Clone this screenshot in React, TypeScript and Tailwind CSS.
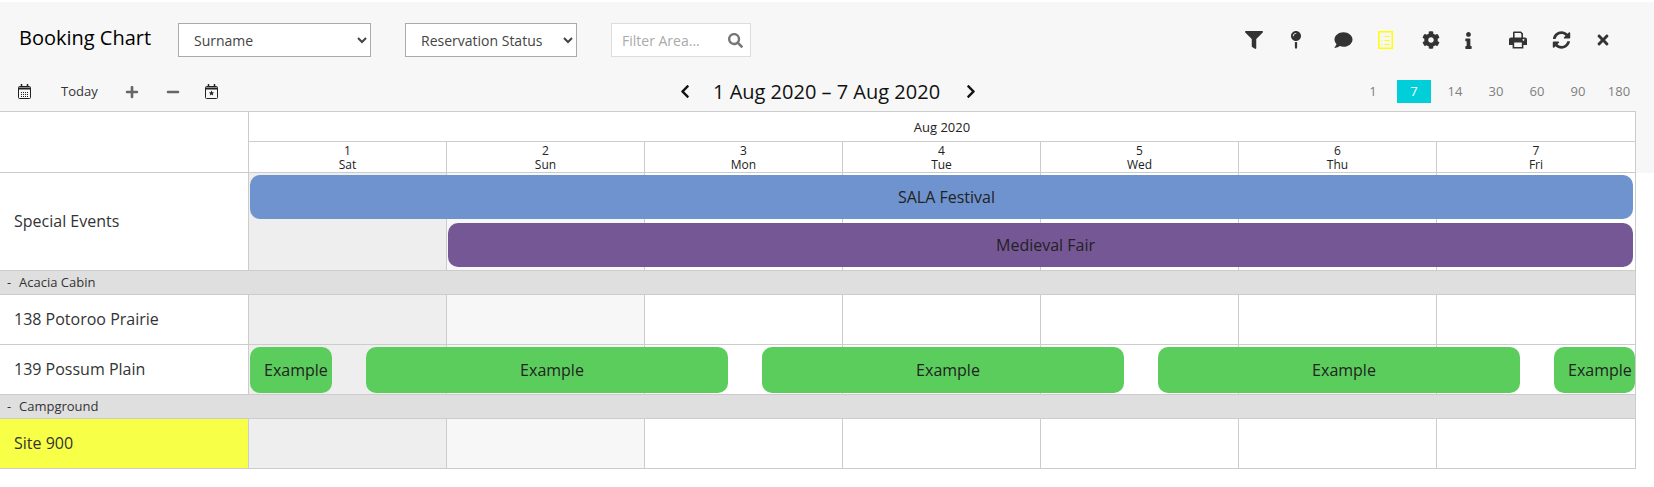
import React from "react";
import {
  FaCog,
  FaComment,
  FaFilter,
  FaInfo,
  FaMapPin,
  FaMinus,
  FaPlus,
  FaSearch,
  FaSyncAlt,
  FaTimes,
  FaChevronLeft,
  FaChevronRight,
} from "react-icons/fa";

const days = [
  ["1", "Sat"],
  ["2", "Sun"],
  ["3", "Mon"],
  ["4", "Tue"],
  ["5", "Wed"],
  ["6", "Thu"],
  ["7", "Fri"],
];

function ListIcon() {
  return (
    <svg viewBox="0 0 15 18" className="w-[15px] h-[18px]" fill="none" stroke="#ffff00">
      <rect x="0.75" y="0.75" width="13.5" height="16.5" strokeWidth="1.5" />
      <path d="M3.500 5.500h1M6.500 5.500h5M3.500 9.500h1M6.500 9.500h5M3.500 13.500h1M6.500 13.500h5" strokeWidth="1" />
    </svg>
  );
}

function PrintIcon() {
  return (
    <svg viewBox="0 0 18 18" className="w-[18px] h-[18px]" fill="#333">
      <path d="M4 7V1.500A1 1 0 0 1 5 .5h7l2 2V7h-1.600V3.200L11.600 2H5.600v5z" />
      <path
        d="M2 6.500h14a2 2 0 0 1 2 2V14h-3.600v3.500H3.600V14H0V8.500a2 2 0 0 1 2-2zM5.200 11.500V16h7.600v-4.500zM14.500 8a.9.9 0 1 0 .01 0z"
        fillRule="evenodd"
      />
    </svg>
  );
}

function CalendarIcon({ star }: { star?: boolean }) {
  return (
    <svg viewBox="0 0 13 15" className="w-[13px] h-[15px]" fill="none" stroke="#222">
      <rect x="0.5" y="2.500" width="12" height="12" rx="1" strokeWidth="1" />
      <path d="M1 4.500h11" strokeWidth="2" />
      <path d="M3.500 0v3M9.500 0v3" strokeWidth="1.500" />
      {star ? (
        <path d="M6.500 6.500l.8 1.700 1.800.2-1.300 1.200.3 1.800-1.600-.9-1.600.9.3-1.800-1.300-1.200 1.800-.2z" fill="#222" stroke="none" />
      ) : (
        <path d="M3 8.500h7M3 10.500h7M3 12.500h7" strokeWidth="1" strokeDasharray="1 1" />
      )}
    </svg>
  );
}

function DayCells() {
  return (
    <div className="grid grid-cols-[repeat(7,198px)] h-full">
      {days.map(([d], i) => (
        <div
          key={d}
          className={[
            "border-r border-[#ccc] last:border-r-0 h-full",
            i === 0 ? "bg-[#eeeeee]" : "",
            i === 1 ? "bg-[#f7f7f7]" : "",
          ].join(" ")}
        ></div>
      ))}
    </div>
  );
}

function Row({
  label,
  highlight,
  className,
  children,
}: {
  label: string;
  highlight?: boolean;
  className: string;
  children?: React.ReactNode;
}) {
  return (
    <div className={`flex w-[1636px] border-b border-r border-[#ccc] ${className}`}>
      <div
        className={`w-[249px] shrink-0 border-r border-[#ccc] pl-[14px] pb-[2px] flex items-center text-[16px] text-[#333] ${
          highlight ? "bg-[#f8ff47]" : "bg-white"
        }`}
      >
        {label}
      </div>
      <div className="relative flex-1">
        <DayCells />
        {children}
      </div>
    </div>
  );
}

function GroupRow({ label }: { label: string }) {
  return (
    <div className="flex items-center w-[1636px] h-[24px] bg-[#dfdfdf] border-b border-r border-[#ccc] text-[13px] text-[#333]">
      <span className="pl-[7px] w-[19px]">-</span>
      <span>{label}</span>
    </div>
  );
}

export default function App() {
  return (
    <div className="bg-white min-h-screen font-['Open_Sans',sans-serif] text-[#222] pt-[2px]">
      <div className="bg-[#f7f7f7] h-[109px] pt-[21px]">
        {/* Top bar */}
        <div className="flex items-center h-[34px]">
          <div className="pl-[19px] w-[178px] text-[20px] font-medium text-black -mt-[4px]">Booking Chart</div>
          <select className="w-[193px] h-[34px] bg-white border border-[#aaa] pl-[11px] text-[14px] text-[#444]">
            <option>Surname</option>
          </select>
          <select className="ml-[34px] w-[172px] h-[34px] bg-white border border-[#aaa] pl-[11px] text-[14px] text-[#444]">
            <option>Reservation Status</option>
          </select>
          <div className="ml-[34px] w-[140px] h-[34px] bg-white border border-[#ddd] flex items-center pl-[10px] pr-[7px] justify-between">
            <span className="text-[14px] text-[#aaa]">Filter Area...</span>
            <FaSearch className="text-[15px] text-[#777]" />
          </div>
          <div className="ml-auto pr-[44px] flex items-center text-[#333]">
            <FaFilter className="w-[18px] h-[18px]" />
            <FaMapPin className="ml-[28px] w-[10px] h-[18px]" />
            <FaComment className="ml-[33px] w-[19px] h-[18px]" />
            <span className="ml-[25px]"><ListIcon /></span>
            <FaCog className="ml-[29px] w-[18px] h-[18px]" />
            <FaInfo className="ml-[25px] w-[7px] h-[17px]" />
            <span className="ml-[37px]"><PrintIcon /></span>
            <FaSyncAlt className="ml-[25px] w-[19px] h-[18px]" />
            <FaTimes className="ml-[25px] w-[14px] h-[16px]" />
          </div>
        </div>

        {/* Navigation bar */}
        <div className="flex items-center h-[23px] mt-[23px]">
          <div className="pl-[18px] w-[678px] flex items-center">
            <CalendarIcon />
            <span className="ml-[30px] text-[13px] text-[#333]">Today</span>
            <FaPlus className="ml-[27px] w-[14px] h-[14px] text-[#666]" />
            <FaMinus className="ml-[27px] w-[14px] h-[14px] text-[#666]" />
            <span className="ml-[25px]"><CalendarIcon star /></span>
          </div>
          <FaChevronLeft className="w-[14px] h-[15px] text-[#111]" />
          <div className="ml-[21px] w-[227px] text-center text-[20px] font-medium whitespace-nowrap text-[#111]">1 Aug 2020 – 7 Aug 2020</div>
          <FaChevronRight className="ml-[24px] w-[14px] h-[15px] text-[#111]" />
          <div className="ml-[378px] flex items-center text-[13px] text-[#808080]">
            <div className="w-[34px] text-center">1</div>
            <div className="ml-[7px] w-[34px] h-[23px] flex items-center justify-center bg-[#00ced8] text-white">7</div>
            {["14", "30", "60", "90", "180"].map((n) => (
              <div key={n} className="ml-[7px] w-[34px] text-center">{n}</div>
            ))}
          </div>
        </div>
      </div>

      {/* Chart header */}
      <div className="flex bg-[#f7f7f7]">
        <div className="flex w-[1636px] bg-white border-t border-b border-r border-[#ccc] h-[62px]">
          <div className="w-[249px] shrink-0 border-r border-[#ccc]"></div>
          <div className="flex-1 flex flex-col">
            <div className="h-[30px] pt-[2px] border-b border-[#ccc] flex items-center justify-center text-[13px]">Aug 2020</div>
            <div className="grid grid-cols-[repeat(7,198px)] flex-1">
              {days.map(([d, w]) => (
                <div key={d} className="border-r border-[#ccc] last:border-r-0 text-center text-[12px] leading-[14px] pt-[2px]">
                  <div>{d}</div>
                  <div>{w}</div>
                </div>
              ))}
            </div>
          </div>
        </div>
      </div>

      {/* Chart body */}
      <Row label="Special Events" className="h-[98px]">
        <div className="absolute inset-0 pl-[1px] pr-[2px] pt-[2px] flex flex-col gap-[4px]">
          <div className="h-[44px] rounded-[10px] bg-[#6f93cf] flex items-center justify-center pl-[10px] text-[16px]">SALA Festival</div>
          <div className="h-[44px] ml-[198px] rounded-[10px] bg-[#755795] flex items-center justify-center pl-[10px] text-[16px]">Medieval Fair</div>
        </div>
      </Row>
      <GroupRow label="Acacia Cabin" />
      <Row label="138 Potoroo Prairie" className="h-[50px]" />
      <Row label="139 Possum Plain" className="h-[50px]">
        <div className="absolute inset-0 px-[1px] pt-[2px] pb-[1px] flex gap-[34px] overflow-hidden">
          <div className="w-[82px] shrink-0 rounded-[10px] bg-[#5bcd5d] flex items-center pl-[14px] text-[16px]">Example</div>
          {[1, 2, 3].map((i) => (
            <div key={i} className="w-[362px] shrink-0 rounded-[10px] bg-[#5bcd5d] flex items-center justify-center pl-[10px] text-[16px]">Example</div>
          ))}
          <div className="w-[81px] shrink-0 rounded-[10px] bg-[#5bcd5d] flex items-center pl-[14px] text-[16px]">Example</div>
        </div>
      </Row>
      <GroupRow label="Campground" />
      <Row label="Site 900" highlight className="h-[50px]" />
    </div>
  );
}
